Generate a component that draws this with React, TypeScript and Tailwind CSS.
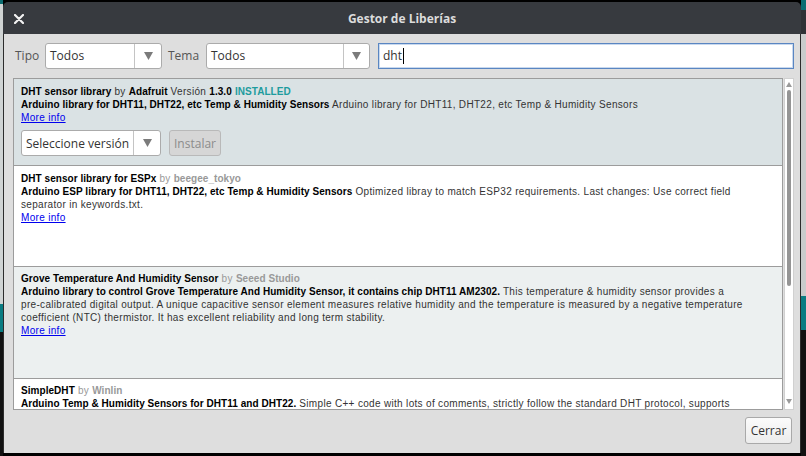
import React from "react";

const chrome = { fontFamily: '"Open Sans", "Noto Sans", sans-serif' };
const listFont = { fontFamily: '"Liberation Sans", Arial, sans-serif' };

function Arrow() {
  return (
    <svg width="9" height="8" viewBox="0 0 9 8">
      <polygon points="0,0 9,0 4.5,8" fill="#7b7b7b" />
    </svg>
  );
}

function Combo({ label, w, arrowW }: { label: string; w: string; arrowW: string }) {
  return (
    <div className={`flex h-[26px] ${w} bg-white border border-[#ababab] rounded-[3px] shrink-0`}>
      <div className="flex-1 flex items-center pl-[4px] text-[12px] text-[#333]">{label}</div>
      <div className={`${arrowW} border-l border-[#c4c4c4] flex items-center justify-center`}>
        <Arrow />
      </div>
    </div>
  );
}

function B({ children, c = "text-black" }: { children: React.ReactNode; c?: string }) {
  return <b className={`${c} tracking-[0.05px]`}>{children}</b>;
}

function MoreInfo() {
  return <div className="text-[#0000ee] underline">More info</div>;
}

export default function App() {
  return (
    <div className="w-[806px] h-[456px] bg-black flex overflow-hidden" style={chrome}>
      {/* desktop bits peeking out behind the dialog */}
      <div className="w-[3px] flex flex-col shrink-0">
        <div className="h-[4px] bg-[#0b6d72]" />
        <div className="h-[300px] bg-[#cfd3d3]" />
        <div className="h-[28px] bg-[#0a7c82]" />
        <div className="flex-1 bg-[#111]" />
      </div>

      <div className="w-[798px] h-[451px] mt-[2px] flex flex-col shrink-0">
        {/* title bar */}
        <div className="h-[32px] bg-[#373a3f] rounded-t-[5px] relative flex items-center justify-center">
          <svg className="absolute left-[11px] top-[12px]" width="10" height="10" viewBox="0 0 10 10">
            <path d="M1 1 L9 9 M9 1 L1 9" stroke="#f2f2f2" strokeWidth="2.2" strokeLinecap="round" />
          </svg>
          <div className="text-[12px] font-bold text-[#dcdcdc] mt-[1px]">Gestor de Liberías</div>
        </div>

        {/* body */}
        <div className="flex-1 bg-[#dedede] border-x border-[#2c2c2c] flex flex-col pl-[9px] pr-[6px] pt-[9px] pb-[9px]">
          <div className="flex items-center h-[26px]">
            <div className="text-[12px] text-[#555] pl-[2px] w-[32px]">Tipo</div>
            <Combo label="Todos" w="w-[117px]" arrowW="w-[27px]" />
            <div className="text-[12px] text-[#555] ml-[6px] w-[38px]">Tema</div>
            <Combo label="Todos" w="w-[164px]" arrowW="w-[26px]" />
            <div className="ml-[8px] flex-1 h-[26px] bg-white border border-[#5a86c2] shadow-[inset_0_0_0_1px_#c9d9ee] flex items-center pl-[4px] text-[12px] text-[#333]">
              dht
              <span className="inline-block w-[1px] h-[16px] bg-black ml-[1px]" />
            </div>
          </div>

          {/* library list */}
          <div className="mt-[9px] flex h-[332px]">
            <div className="w-[771px] border border-[#9c9c9c] bg-white overflow-hidden text-[10px] leading-[13px] text-[#333] tracking-[0.32px]" style={listFont}>
              <div className="h-[87px] bg-[#dae2e4] pt-[6px] pl-[7px] pr-[4px] border-b border-[#9c9c9c]">
                <div>
                  <B>DHT sensor library</B> by <B>Adafruit</B> Versión <B>1.3.0</B> <B c="text-[#1e9c9e]">INSTALLED</B>
                </div>
                <div>
                  <B>Arduino library for DHT11, DHT22, etc Temp &amp; Humidity Sensors</B> Arduino library for DHT11, DHT22, etc Temp &amp; Humidity Sensors
                </div>
                <MoreInfo />
                <div className="flex gap-[8px] mt-[6px] tracking-normal" style={chrome}>
                  <Combo label="Seleccione versión" w="w-[140px]" arrowW="w-[27px]" />
                  <div className="h-[26px] w-[52px] border border-[#b9b9b9] rounded-[3px] bg-[#d6d6d6] flex items-center justify-center text-[12px] text-[#8c8c8c]">
                    Instalar
                  </div>
                </div>
              </div>

              <div className="h-[101px] bg-white pt-[6px] pl-[7px] pr-[4px] border-b border-[#9c9c9c]">
                <div>
                  <B>DHT sensor library for ESPx</B> <span className="text-[#999]">by <B c="text-[#999]">beegee_tokyo</B></span>
                </div>
                <div>
                  <B>Arduino ESP library for DHT11, DHT22, etc Temp &amp; Humidity Sensors</B> Optimized libray to match ESP32 requirements. Last changes: Use correct field
                  <br />
                  separator in keywords.txt.
                </div>
                <MoreInfo />
              </div>

              <div className="h-[112px] bg-[#ecf0f0] pt-[5px] pl-[7px] pr-[4px] border-b border-[#9c9c9c]">
                <div>
                  <B>Grove Temperature And Humidity Sensor</B> <span className="text-[#999]">by <B c="text-[#999]">Seeed Studio</B></span>
                </div>
                <div>
                  <B>Arduino library to control Grove Temperature And Humidity Sensor, it contains chip DHT11 AM2302.</B> This temperature &amp; humidity sensor provides a
                  <br />
                  pre-calibrated digital output. A unique capacitive sensor element measures relative humidity and the temperature is measured by a negative temperature
                  <br />
                  coefficient (NTC) thermistor. It has excellent reliability and long term stability.
                </div>
                <MoreInfo />
              </div>

              <div className="bg-white pt-[5px] pl-[7px] pr-[4px]">
                <div>
                  <B>SimpleDHT</B> <span className="text-[#999]">by <B c="text-[#999]">Winlin</B></span>
                </div>
                <div>
                  <B>Arduino Temp &amp; Humidity Sensors for DHT11 and DHT22.</B> Simple C++ code with lots of comments, strictly follow the standard DHT protocol, supports
                </div>
              </div>
            </div>

            {/* scrollbar */}
            <div className="ml-[1px] w-[10px] bg-white border border-[#d0d0d0] flex flex-col items-center py-[2px]">
              <svg width="6" height="5" viewBox="0 0 6 5" className="mt-[1px]">
                <polygon points="3,0 6,5 0,5" fill="#9a9a9a" />
              </svg>
              <div className="w-[4px] h-[196px] mt-[3px] rounded-full bg-[#959595]" />
              <div className="flex-1" />
              <svg width="6" height="5" viewBox="0 0 6 5" className="mb-[3px]">
                <polygon points="0,0 6,0 3,5" fill="#9a9a9a" />
              </svg>
            </div>
          </div>

          <div className="mt-auto flex justify-end pr-[2px]">
            <div className="h-[27px] w-[47px] border border-[#a9a9a9] rounded-[3px] bg-gradient-to-b from-[#fbfbfb] to-[#ececec] flex items-center justify-center text-[12px] text-[#333]">
              Cerrar
            </div>
          </div>
        </div>
      </div>

      <div className="w-[5px] flex flex-col shrink-0">
        <div className="h-[10px] bg-[#0b6d72]" />
        <div className="h-[24px] bg-[#2f3236]" />
        <div className="h-[262px] bg-[#c9cccc]" />
        <div className="h-[34px] bg-[#0a7c82]" />
        <div className="flex-1 bg-[#111]" />
      </div>
    </div>
  );
}
